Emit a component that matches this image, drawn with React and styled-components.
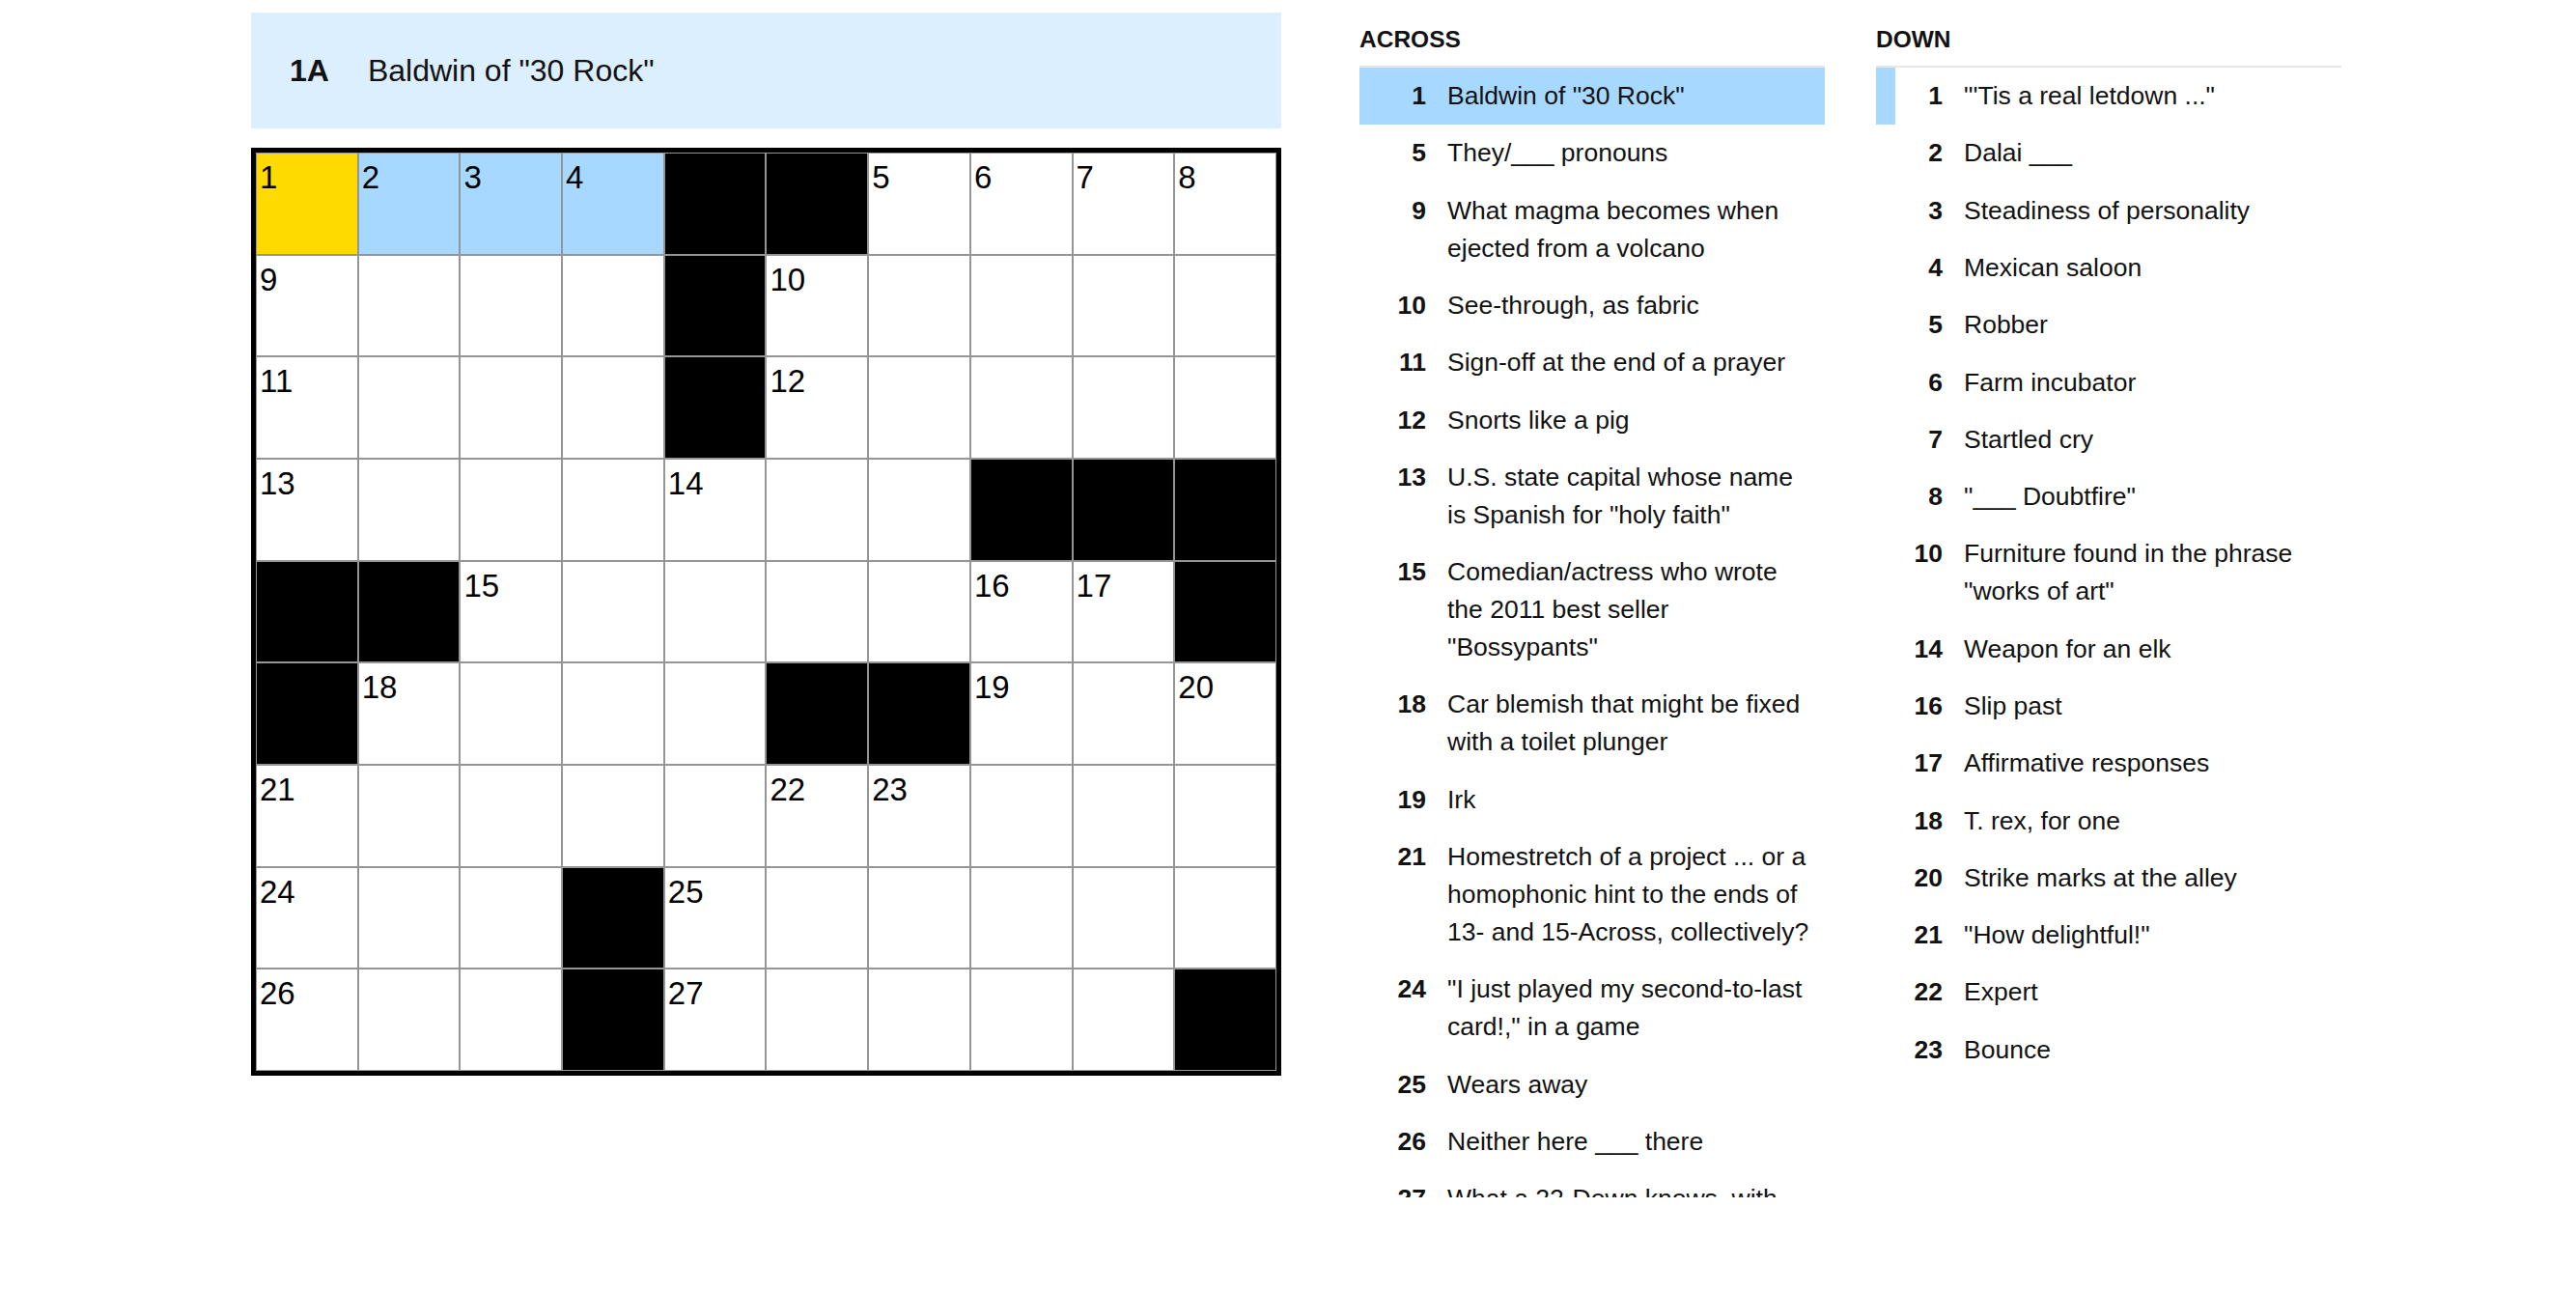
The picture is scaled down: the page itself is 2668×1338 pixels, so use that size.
import React from 'react';
import styled, { createGlobalStyle } from 'styled-components';

const GlobalStyle = createGlobalStyle`
  body {
    margin: 0;
    background: #fff;
    color: #121212;
    font-family: 'Liberation Sans', Arial, sans-serif;
  }
`;

// '#' = block, '.' = open square
const LAYOUT = [
  '....##....',
  '....#.....',
  '....#.....',
  '.......###',
  '##.......#',
  '#....##...',
  '..........',
  '...#......',
  '...#.....#',
];

const ACROSS = [
  [1, 'Baldwin of "30 Rock"'],
  [5, 'They/___ pronouns'],
  [9, 'What magma becomes when ejected from a volcano'],
  [10, 'See-through, as fabric'],
  [11, 'Sign-off at the end of a prayer'],
  [12, 'Snorts like a pig'],
  [13, 'U.S. state capital whose name is Spanish for "holy faith"'],
  [15, 'Comedian/actress who wrote the 2011 best seller "Bossypants"'],
  [18, 'Car blemish that might be fixed with a toilet plunger'],
  [19, 'Irk'],
  [21, 'Homestretch of a project ... or a homophonic hint to the ends of 13- and 15-Across, collectively?'],
  [24, '"I just played my second-to-last card!," in a game'],
  [25, 'Wears away'],
  [26, 'Neither here ___ there'],
  [27, 'What a 22-Down knows, with "the"'],
];

const DOWN = [
  [1, '"\'Tis a real letdown ..."'],
  [2, 'Dalai ___'],
  [3, 'Steadiness of personality'],
  [4, 'Mexican saloon'],
  [5, 'Robber'],
  [6, 'Farm incubator'],
  [7, 'Startled cry'],
  [8, '"___ Doubtfire"'],
  [10, 'Furniture found in the phrase "works of art"'],
  [14, 'Weapon for an elk'],
  [16, 'Slip past'],
  [17, 'Affirmative responses'],
  [18, 'T. rex, for one'],
  [20, 'Strike marks at the alley'],
  [21, '"How delightful!"'],
  [22, 'Expert'],
  [23, 'Bounce'],
];

const isBlock = (r, c) =>
  r < 0 || c < 0 || r >= LAYOUT.length || c >= LAYOUT[0].length || LAYOUT[r][c] === '#';

function buildCells() {
  const cells = [];
  let n = 0;
  LAYOUT.forEach((row, r) => {
    row.split('').forEach((ch, c) => {
      if (ch === '#') {
        cells.push({ key: `${r}-${c}`, block: true });
        return;
      }
      const startsAcross = isBlock(r, c - 1) && !isBlock(r, c + 1);
      const startsDown = isBlock(r - 1, c) && !isBlock(r + 1, c);
      const label = startsAcross || startsDown ? ++n : null;
      let tone = 'plain';
      if (r === 0 && c === 0) tone = 'selected';
      else if (r === 0 && c < 4) tone = 'word';
      cells.push({ key: `${r}-${c}`, block: false, label, tone });
    });
  });
  return cells;
}

const CELL_BG = {
  plain: '#fff',
  word: '#a7d8ff',
  selected: '#ffda00',
};

const Page = styled.div`
  display: flex;
  align-items: flex-start;
  gap: 81px;
  padding: 13px 0 0 260px;
`;

const BoardColumn = styled.div`
  display: flex;
  flex-direction: column;
  gap: 20px;
  width: 1067px;
`;

const ClueBar = styled.div`
  display: flex;
  align-items: center;
  height: 120px;
  padding-left: 40px;
  background: #dcefff;
  font-size: 32px;
`;

const BarLabel = styled.span`
  font-weight: 700;
  margin-right: 40px;
`;

const Board = styled.div`
  box-sizing: border-box;
  width: 1067px;
  height: 961px;
  display: grid;
  grid-template-columns: repeat(10, 1fr);
  grid-template-rows: repeat(9, 1fr);
  gap: 2px;
  padding: 1px;
  border: 5px solid #000;
  background: #959595;
`;

const Cell = styled.div`
  position: relative;
  background: ${({ $block, $tone }) => ($block ? '#000' : CELL_BG[$tone])};
`;

const CellNumber = styled.span`
  position: absolute;
  top: 8px;
  left: 3px;
  font-family: 'Liberation Sans', Arial, sans-serif;
  font-size: 33px;
  line-height: 1;
  color: #000;
`;

const ClueLists = styled.div`
  display: flex;
  gap: 53px;
  margin-top: 15.5px;
`;

const ClueSection = styled.section`
  width: 482px;
`;

const SectionTitle = styled.h3`
  margin: 0;
  padding-bottom: 15px;
  border-bottom: 2px solid #e6e6e6;
  font-size: 24.5px;
  line-height: 1;
  font-weight: 700;
  text-transform: uppercase;
`;

const ClueScroll = styled.ol`
  list-style: none;
  margin: 0;
  padding: 0;
  height: 1170px;
  overflow: hidden;
`;

const ClueItem = styled.li`
  display: grid;
  grid-template-columns: 49px 1fr;
  column-gap: 22px;
  padding: 10.15px 12px 10.15px 0;
  border-left: 20px solid ${({ $cross, $active }) => ($active || $cross ? '#a7d8ff' : 'transparent')};
  background: ${({ $active }) => ($active ? '#a7d8ff' : 'transparent')};
  font-size: 26.5px;
  line-height: 39px;
`;

const ClueNum = styled.span`
  font-weight: 700;
  text-align: right;
`;

const ClueText = styled.span``;

const ClueList = ({ title, clues, active, cross }) => (
  <ClueSection>
    <SectionTitle>{title}</SectionTitle>
    <ClueScroll>
      {clues.map(([num, text]) => (
        <ClueItem key={num} $active={num === active} $cross={num === cross}>
          <ClueNum>{num}</ClueNum>
          <ClueText>{text}</ClueText>
        </ClueItem>
      ))}
    </ClueScroll>
  </ClueSection>
);

export default function App() {
  const cells = buildCells();
  return (
    <>
      <GlobalStyle />
      <Page>
        <BoardColumn>
          <ClueBar>
            <BarLabel>1A</BarLabel>
            <span>Baldwin of "30 Rock"</span>
          </ClueBar>
          <Board>
            {cells.map((cell) => (
              <Cell key={cell.key} $block={cell.block} $tone={cell.tone}>
                {cell.label && <CellNumber>{cell.label}</CellNumber>}
              </Cell>
            ))}
          </Board>
        </BoardColumn>
        <ClueLists>
          <ClueList title="Across" clues={ACROSS} active={1} />
          <ClueList title="Down" clues={DOWN} cross={1} />
        </ClueLists>
      </Page>
    </>
  );
}
